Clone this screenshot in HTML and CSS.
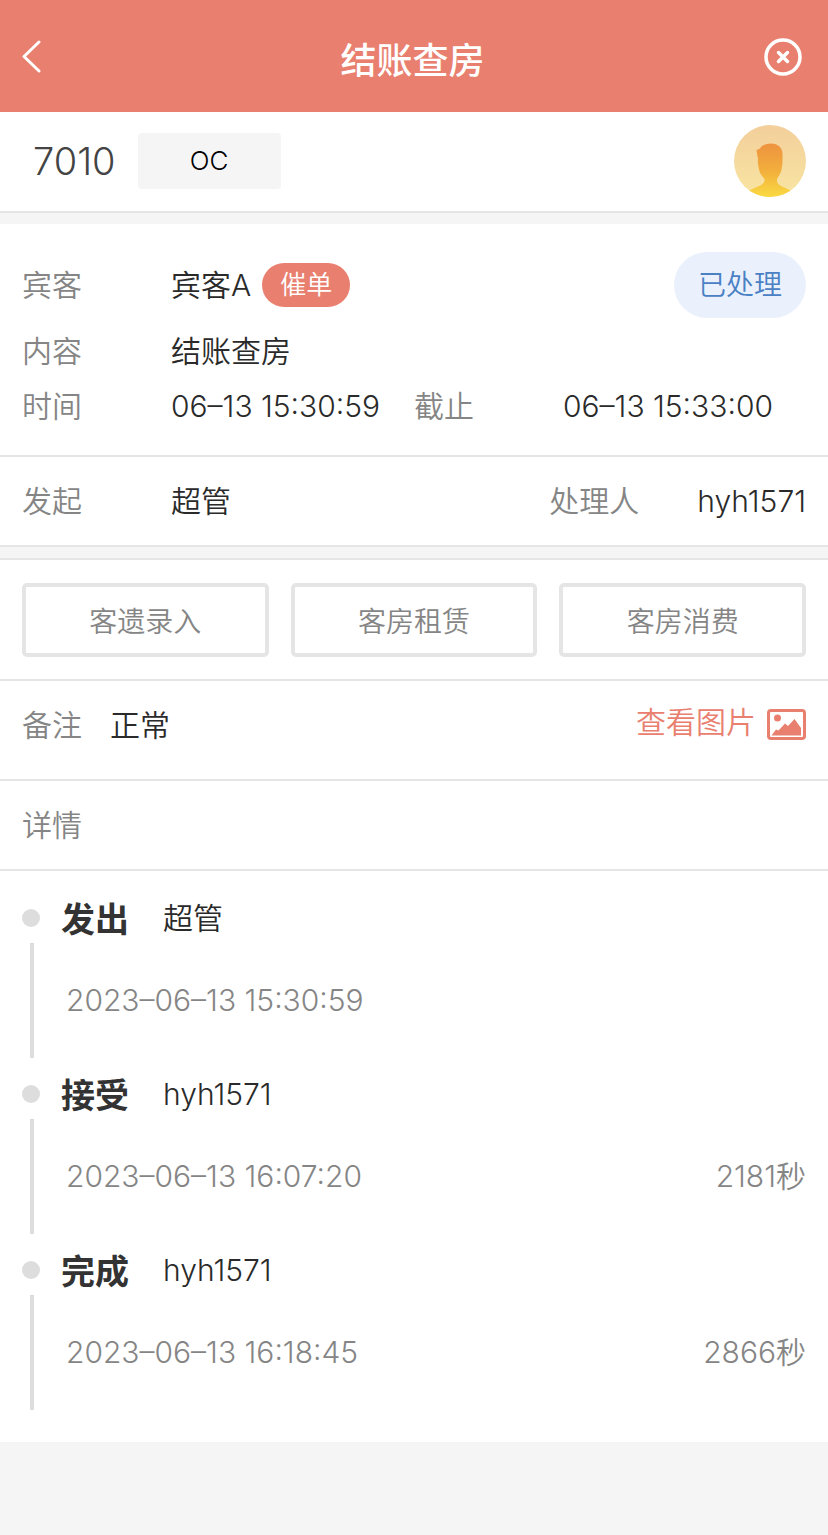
FILE: index.html
```
<!DOCTYPE html>
<html lang="zh-CN">
<head>
  <meta charset="UTF-8">
  <meta name="viewport" content="width=device-width, initial-scale=1.0">
  <title>结账查房</title>
  <link rel="stylesheet" href="styles.css">
</head>
<body>
  <!-- Header -->
  <header class="header">
    <button class="icon-button" type="button" aria-label="返回">
      <svg width="40" height="40" viewBox="0 0 40 40" fill="none" stroke="#fff" stroke-width="3" stroke-linecap="round" stroke-linejoin="round">
        <path d="M17 5L2 19.500L17 34"/>
      </svg>
    </button>
    <h1>结账查房</h1>
    <button class="icon-button" type="button" aria-label="关闭">
      <svg width="40" height="40" viewBox="0 0 40 40" fill="none" stroke="#fff" stroke-linecap="round">
        <circle cx="20" cy="20" r="17" stroke-width="3.500"/>
        <path d="M15.500 15.500L24.500 24.500M24.500 15.500L15.500 24.500" stroke-width="3.500"/>
      </svg>
    </button>
  </header>

  <!-- Room -->
  <section class="room">
    <span class="room-number">7010</span>
    <span class="room-status">OC</span>
    <svg class="avatar" width="72" height="72" viewBox="0 0 72 72" role="img" aria-label="头像">
      <defs>
        <linearGradient id="avatarBg" x1="0" y1="0" x2="0" y2="1">
          <stop offset="0" stop-color="#f3cf9b"/>
          <stop offset="1" stop-color="#f8e5a2"/>
        </linearGradient>
        <linearGradient id="avatarMan" x1="0" y1="0" x2="0" y2="1">
          <stop offset="0" stop-color="#ee9340"/>
          <stop offset="0.500" stop-color="#f2ae3c"/>
          <stop offset="1" stop-color="#fada42"/>
        </linearGradient>
        <clipPath id="avatarClip"><circle cx="36" cy="36" r="36"/></clipPath>
      </defs>
      <g clip-path="url(#avatarClip)">
        <rect width="72" height="72" fill="url(#avatarBg)"/>
        <path d="M22.500 25L26 23.500C28 20 32 18.500 37 18.500C44 18.500 48.500 23 48.500 29V34C48.500 37 48.500 40 48 42C47.500 47 45 51 43 54C42.500 58 45 60 48 61.500C52 63.500 55 64 58 67V72H13V67C17 64 20 63.500 24 61.500C28 60 31 58 30.500 54C27.500 51 25 47 24.500 42C24 39 23.500 36 24 33C23 30 23 27 22.500 25Z" fill="url(#avatarMan)"/>
      </g>
    </svg>
  </section>

  <!-- Task info -->
  <section class="info">
    <div class="info-row">
      <span class="label">宾客</span>
      <span class="value">宾客A</span>
      <span class="badge">催单</span>
      <span class="state">已处理</span>
    </div>
    <div class="info-row">
      <span class="label">内容</span>
      <span class="value">结账查房</span>
    </div>
    <div class="info-row time-row">
      <div class="half"><span class="label">时间</span><span class="value">06–13 15:30:59</span></div>
      <div class="half"><span class="label">截止</span><span class="value">06–13 15:33:00</span></div>
    </div>
  </section>
  <section class="people">
    <span class="label">发起</span>
    <span class="value">超管</span>
    <span class="handler">处理人</span>
    <span class="value">hyh1571</span>
  </section>

  <!-- Actions -->
  <section class="actions">
    <button type="button">客遗录入</button>
    <button type="button">客房租赁</button>
    <button type="button">客房消费</button>
  </section>

  <section class="remark">
    <span class="remark-label">备注</span>
    <span class="value">正常</span>
    <a class="view-image" href="#">
      查看图片
      <svg width="40" height="32" viewBox="0 0 40 32">
        <rect x="2.500" y="1.500" width="36" height="28" rx="2.500" fill="none" stroke="#e9806f" stroke-width="3"/>
        <circle cx="11.500" cy="9" r="3.500" fill="#e9806f"/>
        <path d="M5.500 26.500L10 20.500L12.500 21.500L19 14.500L22 17L28.500 10L35 19V26.500Z" fill="#e9806f"/>
      </svg>
    </a>
  </section>

  <h2 class="detail-title">详情</h2>

  <!-- Timeline -->
  <ol class="timeline">
    <li>
      <div class="step-head"><span class="dot"></span><h3>发出</h3><span class="value">超管</span></div>
      <div class="step-body"><time>2023–06–13 15:30:59</time></div>
    </li>
    <li>
      <div class="step-head"><span class="dot"></span><h3>接受</h3><span class="value">hyh1571</span></div>
      <div class="step-body"><time>2023–06–13 16:07:20</time><span>2181秒</span></div>
    </li>
    <li>
      <div class="step-head"><span class="dot"></span><h3>完成</h3><span class="value">hyh1571</span></div>
      <div class="step-body"><time>2023–06–13 16:18:45</time><span>2866秒</span></div>
    </li>
  </ol>
</body>
</html>
```
FILE: styles.css
```
* {
  box-sizing: border-box;
}
body {
  margin: 0;
  background-color: #f5f5f5;
  color: #858585;
  font-family: Inter, "Noto Sans CJK SC", sans-serif;
  font-size: 30px;
  font-weight: 350;
  line-height: 44px;
}
h1, h2, h3 {
  margin: 0;
}
button {
  font-family: inherit;
  font-weight: inherit;
  cursor: pointer;
}
.header {
  display: flex;
  justify-content: space-between;
  align-items: center;
  height: 112px;
  padding: 2px 25px 0 22px;
  background-color: #e9806f;
}
.header h1 {
  padding-top: 8px;
  color: #ffffff;
  font-size: 36px;
  font-weight: 500;
}
.icon-button {
  display: flex;
  padding: 0;
  border: none;
  background: none;
}
.room {
  display: flex;
  align-items: center;
  padding: 13px 22px 14px 33px;
  margin-bottom: 11px;
  background-color: #ffffff;
  border-bottom: 2px solid #e5e5e5;
}
.room-number {
  color: #444444;
  font-size: 38px;
}
.room-status {
  width: 143px;
  margin-left: 22px;
  border-radius: 4px;
  background-color: #f5f5f5;
  color: #000000;
  font-size: 26px;
  line-height: 56px;
  text-align: center;
}
.avatar {
  margin-left: auto;
}
.info {
  padding: 28px 22px 27px;
  background-color: #ffffff;
  border-bottom: 2px solid #e5e5e5;
}
.info-row {
  display: flex;
  align-items: center;
  min-height: 66px;
}
.time-row {
  min-height: 44px;
}
.half {
  display: flex;
  width: 50%;
}
.label {
  flex: none;
  width: 149px;
}
.value {
  color: #2a2a2a;
}
.badge {
  margin-left: 11px;
  padding: 0 18px;
  border-radius: 22px;
  background-color: #e9806f;
  color: #ffffff;
  font-size: 26px;
}
.state {
  margin-left: auto;
  padding: 0 24px;
  border-radius: 33px;
  background-color: #eaf1fc;
  color: #4a80c4;
  font-size: 28px;
  line-height: 66px;
}
.people {
  display: flex;
  padding: 22px;
  margin-bottom: 11px;
  background-color: #ffffff;
  border-bottom: 2px solid #e5e5e5;
}
.handler {
  margin-left: auto;
  margin-right: 58px;
}
.actions {
  display: grid;
  grid-template-columns: repeat(3, 1fr);
  gap: 22px;
  padding: 23px 22px 22px;
  background-color: #ffffff;
  border-top: 2px solid #e5e5e5;
  border-bottom: 2px solid #e5e5e5;
}
.actions button {
  height: 74px;
  padding: 0;
  border: 4px solid #e5e5e5;
  border-radius: 5px;
  background-color: #ffffff;
  color: #858585;
  font-size: 28px;
}
.remark {
  display: flex;
  align-items: flex-start;
  padding: 22px 22px 32px;
  background-color: #ffffff;
  border-bottom: 2px solid #e5e5e5;
}
.remark-label {
  margin-right: 28px;
}
.view-image {
  display: flex;
  align-items: flex-end;
  gap: 10px;
  margin-left: auto;
  color: #e9806f;
  line-height: 38px;
  text-decoration: none;
}
.detail-title {
  padding: 22px;
  background-color: #ffffff;
  border-bottom: 2px solid #e5e5e5;
  font-size: 30px;
  font-weight: 350;
}
.timeline {
  margin: 0;
  padding: 25px 22px 18px;
  background-color: #ffffff;
  list-style: none;
}
.timeline li {
  padding-bottom: 14px;
}
.step-head {
  display: flex;
  align-items: center;
  height: 44px;
  margin-bottom: 3px;
}
.dot {
  width: 18px;
  height: 18px;
  margin-right: 21px;
  border-radius: 50%;
  background-color: #dddddd;
}
.step-head h3 {
  padding-top: 4px;
  margin-right: 34px;
  color: #333333;
  font-size: 34px;
  font-weight: 700;
}
.step-body {
  display: flex;
  justify-content: space-between;
  height: 115px;
  margin-left: 8px;
  padding: 35px 0 0 32px;
  border-left: 4px solid #dddddd;
}
```
